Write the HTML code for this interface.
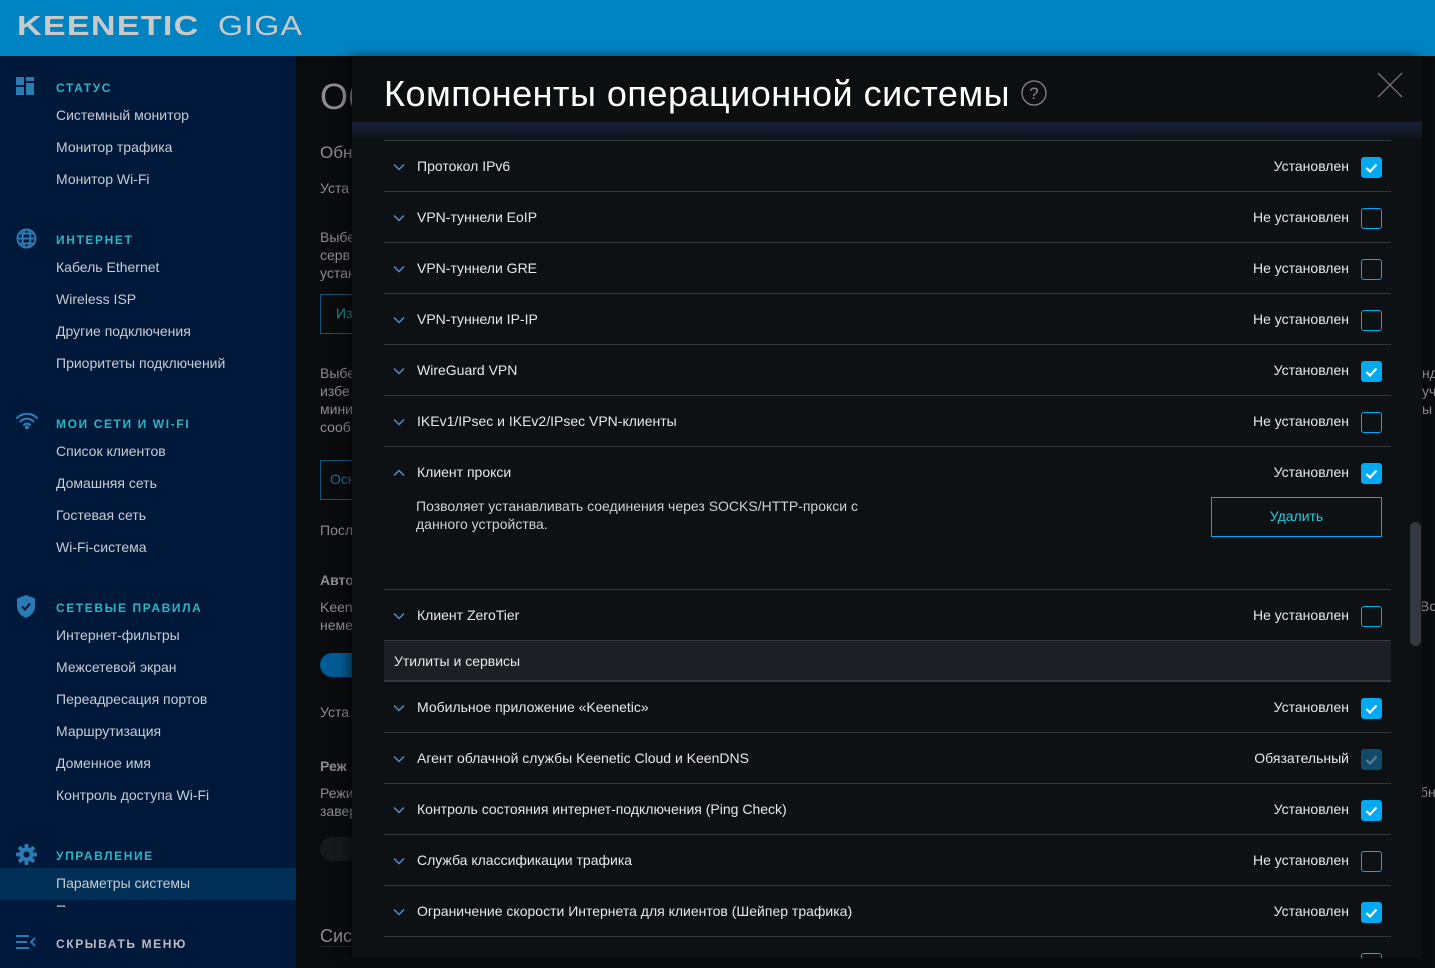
<!DOCTYPE html>
<html><head><meta charset="utf-8"><style>
*{margin:0;padding:0;box-sizing:border-box}
body{width:1435px;height:968px;overflow:hidden;background:#0a0b0d;font-family:"Liberation Sans",Arial,sans-serif;position:relative;color:#ddd}
.abs{position:absolute}
#top{left:0;top:0;width:1435px;height:56px;background:#0083c3}
#side{left:0;top:56px;width:296px;height:912px;background:#001839}
.sh{position:absolute;left:56px;font-size:12px;font-weight:bold;letter-spacing:1.6px;color:#2bb5c1}
.si{position:absolute;left:56px;font-size:14px;color:#c8ccd2}
.ico{position:absolute;left:16px}
#main{left:296px;top:56px;width:1139px;height:912px;background:#0a0b0d}
.mt{position:absolute;color:#8a8d91;font-size:14px;white-space:nowrap}
#modal{left:352px;top:56px;width:1070px;height:902px;background:#0e1114;box-shadow:-4px 0 10px rgba(0,0,0,.5);overflow:hidden}
#mh{position:absolute;left:0;top:0;width:1070px;height:66px;background:#0c0e10}
#grad{position:absolute;left:0;top:66px;width:1070px;height:18px;background:linear-gradient(#16233a,#0e1114)}
.row{position:absolute;left:32px;width:1007px;height:51px;border-top:1px solid #34383c}
.row .n{position:absolute;left:33px;top:17px;font-size:14px;color:#e8e8e8;white-space:nowrap}
.row .s{position:absolute;right:42px;top:17px;font-size:14px;color:#e8e8e8;white-space:nowrap}
.row .ch{position:absolute;left:9px;top:22px}
.cb{position:absolute;right:9px;top:16px;width:21px;height:21px;border-radius:3px}
.cb.on{background:#00aaf3}
.cb.off{border:1.5px solid #00aaf3}
.cb.dis{background:#0f4a6c}
.cb svg{position:absolute;left:4px;top:5px}
</style></head><body>
<div id="top" class="abs">
<div class="abs" style="left:17px;top:10px;font-size:28px;color:#c9c9c9;letter-spacing:1px;font-weight:bold;transform:scaleX(1.22);transform-origin:left;">KEENETIC</div>
<div class="abs" style="left:218px;top:10px;font-size:28px;color:#c9c9c9;letter-spacing:1px;transform:scaleX(1.15);transform-origin:left">GIGA</div>
</div>
<div id="side" class="abs">
<svg class="ico" style="top:21px" width="20" height="20"><rect x="0" y="0" width="8" height="8" fill="#2a7ab4"/><rect x="10" y="0" width="8" height="4" fill="#2a7ab4"/><rect x="10" y="6" width="8" height="12" fill="#2a7ab4"/><rect x="0" y="10" width="8" height="8" fill="#2a7ab4"/></svg>
<div class="sh" style="top:25px">СТАТУС</div>
<div class="si" style="top:51px">Системный монитор</div>
<div class="si" style="top:83px">Монитор трафика</div>
<div class="si" style="top:115px">Монитор Wi-Fi</div>
<svg class="ico" style="top:172px" width="21" height="21" fill="none" stroke="#2a7ab4" stroke-width="2"><circle cx="10.5" cy="10.5" r="9"/><ellipse cx="10.5" cy="10.5" rx="4" ry="9"/><line x1="1.5" y1="10.5" x2="19.5" y2="10.5"/><line x1="3" y1="5.5" x2="18" y2="5.5"/><line x1="3" y1="15.5" x2="18" y2="15.5"/></svg>
<div class="sh" style="top:177px">ИНТЕРНЕТ</div>
<div class="si" style="top:203px">Кабель Ethernet</div>
<div class="si" style="top:235px">Wireless ISP</div>
<div class="si" style="top:267px">Другие подключения</div>
<div class="si" style="top:299px">Приоритеты подключений</div>
<svg class="ico" style="top:357px" width="22" height="16" fill="none" stroke="#2a7ab4" stroke-width="2.2" stroke-linecap="round"><path d="M1 5a14 14 0 0 1 20 0"/><path d="M4.5 8.5a9 9 0 0 1 13 0"/><path d="M8 12a4 4 0 0 1 6 0"/><circle cx="11" cy="14.5" r="1" fill="#2a7ab4"/></svg>
<div class="sh" style="top:361px">МОИ СЕТИ И WI-FI</div>
<div class="si" style="top:387px">Список клиентов</div>
<div class="si" style="top:419px">Домашняя сеть</div>
<div class="si" style="top:451px">Гостевая сеть</div>
<div class="si" style="top:483px">Wi-Fi-система</div>
<svg class="ico" style="top:539px" width="20" height="23"><path d="M10 0L19 3.5V11c0 6-4 10-9 12C5 21 1 17 1 11V3.5z" fill="#2a7ab4"/><path d="M6 11.5l3 3 5-6" stroke="#001839" stroke-width="2" fill="none"/></svg>
<div class="sh" style="top:545px">СЕТЕВЫЕ ПРАВИЛА</div>
<div class="si" style="top:571px">Интернет-фильтры</div>
<div class="si" style="top:603px">Межсетевой экран</div>
<div class="si" style="top:635px">Переадресация портов</div>
<div class="si" style="top:667px">Маршрутизация</div>
<div class="si" style="top:699px">Доменное имя</div>
<div class="si" style="top:731px">Контроль доступа Wi-Fi</div>
<svg class="ico" style="top:788px" width="21" height="21"><g fill="#2a7ab4"><circle cx="10.5" cy="10.5" r="7"/><rect x="8.5" y="0" width="4" height="21" rx="1"/><rect x="0" y="8.5" width="21" height="4" rx="1"/><rect x="8.5" y="0" width="4" height="21" rx="1" transform="rotate(45 10.5 10.5)"/><rect x="8.5" y="0" width="4" height="21" rx="1" transform="rotate(-45 10.5 10.5)"/></g><circle cx="10.5" cy="10.5" r="3" fill="#001839"/></svg>
<div class="sh" style="top:793px">УПРАВЛЕНИЕ</div>
<div class="abs" style="left:0;top:812px;width:296px;height:32px;background:#003057"></div>
<div class="si" style="top:819px">Параметры системы</div>
<div class="si" style="top:846px;height:5px;overflow:hidden">Пользователи</div>
<div class="abs" style="left:0;top:856px;width:296px;height:56px;background:#001839"></div>
<svg class="ico" style="top:879px" width="20" height="14" stroke="#2a7ab4" stroke-width="2" fill="none"><line x1="0" y1="1" x2="13" y2="1"/><line x1="0" y1="7" x2="11" y2="7"/><line x1="0" y1="13" x2="13" y2="13"/><path d="M19 3l-4 4 4 4"/></svg>
<div class="sh" style="top:881px;color:#b8bcc2">СКРЫВАТЬ МЕНЮ</div>
</div>
<div id="main" class="abs">
<div class="mt" style="left:24px;top:20px;font-size:36px">Об</div>
<div class="mt" style="left:24px;top:87px;font-size:17px">Обн</div>
<div class="mt" style="left:24px;top:124px">Уста</div>
<div class="mt" style="left:24px;top:172px;line-height:18px">Выбе<br>серв<br>устан</div>
<div class="abs" style="left:24px;top:238px;width:60px;height:40px;border:1px solid #0a5a80"></div>
<div class="mt" style="left:40px;top:249px;color:#1b8e8a">Из</div>
<div class="mt" style="left:24px;top:308px;line-height:18px">Выбе<br>избе<br>мини<br>сооб</div>
<div class="abs" style="left:24px;top:404px;width:60px;height:40px;border:1px solid #0a5a80"></div>
<div class="mt" style="left:34px;top:415px;color:#1b6e9a">Осн</div>
<div class="mt" style="left:24px;top:466px">Посл</div>
<div class="mt" style="left:24px;top:516px;font-weight:bold">Авто</div>
<div class="mt" style="left:24px;top:542px;line-height:18px">Keen<br>неме</div>
<div class="abs" style="left:24px;top:597px;width:50px;height:24px;border-radius:12px;background:#005c94"></div>
<div class="mt" style="left:24px;top:648px">Уста</div>
<div class="mt" style="left:24px;top:702px;font-weight:bold">Реж</div>
<div class="mt" style="left:24px;top:728px;line-height:18px">Режи<br>завер</div>
<div class="abs" style="left:24px;top:781px;width:50px;height:24px;border-radius:12px;background:#16181b"></div>
<div class="abs" style="left:24px;top:890px;width:40px;height:1px;background:#222"></div>
<div class="mt" style="left:24px;top:870px;font-size:18px">Сис</div>
<div class="mt" style="left:1126px;top:308px;line-height:18px">нд<br>уч<br>ы</div>
<div class="mt" style="left:1124px;top:542px">Во</div>
<div class="mt" style="left:1124px;top:728px">бн</div>
</div>
<div id="modal" class="abs">
<div id="mh"></div><div id="grad"></div>
<div class="abs" style="left:32px;top:17px;font-size:36px;letter-spacing:0.5px;color:#fff;white-space:nowrap">Компоненты операционной системы</div>
<svg class="abs" style="left:669px;top:24px" width="26" height="26"><circle cx="13" cy="13" r="12" fill="none" stroke="#888" stroke-width="1.3"/><text x="13" y="19" text-anchor="middle" font-size="17" fill="#888" font-family="Liberation Sans">?</text></svg>
<svg class="abs" style="left:1025px;top:16px" width="26" height="26" stroke="#777" stroke-width="1.3"><line x1="1" y1="1" x2="25" y2="25"/><line x1="25" y1="1" x2="1" y2="25"/></svg>
<div class="abs" style="left:1058px;top:466px;width:11px;height:124px;border-radius:6px;background:#33393e"></div>
<div id="rows"></div>
</div>
<script>
var chk='<svg width="13" height="11"><path d="M1.5 6l3.5 3.5 6.5-7" stroke="#fff" stroke-width="2.2" fill="none"/></svg>';
var chkd='<svg width="13" height="11"><path d="M1.5 6l3.5 3.5 6.5-7" stroke="#5e7a8c" stroke-width="2.2" fill="none"/></svg>';
var dn='<svg class="ch" width="12" height="8"><path d="M1 1.5l5 5 5-5" stroke="#4f8fc8" stroke-width="1.5" fill="none"/></svg>';
var up='<svg class="ch" width="12" height="8"><path d="M1 6.5l5-5 5 5" stroke="#4f8fc8" stroke-width="1.5" fill="none"/></svg>';
var I='Установлен',N='Не установлен';
var rows=[[84,'Протокол IPv6',1],[135,'VPN-туннели EoIP',0],[186,'VPN-туннели GRE',0],[237,'VPN-туннели IP-IP',0],[288,'WireGuard VPN',1],[339,'IKEv1/IPsec и IKEv2/IPsec VPN-клиенты',0],[390,'Клиент прокси',1,1],[533,'Клиент ZeroTier',0],
[625,'Мобильное приложение «Keenetic»',1],[676,'Агент облачной службы Keenetic Cloud и KeenDNS',2],[727,'Контроль состояния интернет-подключения (Ping Check)',1],[778,'Служба классификации трафика',0],[829,'Ограничение скорости Интернета для клиентов (Шейпер трафика)',1],[880,'',0]];
var h='';
rows.forEach(function(r){
var st=r[2]==1?I:r[2]==2?'Обязательный':N;
var cb=r[2]==1?'<div class="cb on">'+chk+'</div>':r[2]==2?'<div class="cb dis">'+chkd+'</div>':'<div class="cb off"></div>';
h+='<div class="row" style="top:'+r[0]+'px;height:'+(r[3]?143:51)+'px">'+(r[1]?(r[3]?up:dn)+'<div class="n">'+r[1]+'</div><div class="s">'+st+'</div>':'')+cb;
if(r[3]){h+='<div class="abs" style="left:32px;top:50px;font-size:14px;color:#d0d0d0;line-height:18px">Позволяет устанавливать соединения через SOCKS/HTTP-прокси с<br>данного устройства.</div><div class="abs" style="left:827px;top:50px;width:171px;height:40px;border:1.5px solid #00aaf3;color:#1fd0e0;font-size:14px;text-align:center;line-height:37px">Удалить</div>';}
h+='</div>';});
h+='<div class="abs" style="left:32px;top:584px;width:1007px;height:41px;background:#1c1f23;border-top:1px solid #34383c;border-bottom:1px solid #34383c"><div class="abs" style="left:10px;top:12px;font-size:14px;color:#e8e8e8">Утилиты и сервисы</div></div>';
document.getElementById('rows').innerHTML=h;
</script>
</body></html>
